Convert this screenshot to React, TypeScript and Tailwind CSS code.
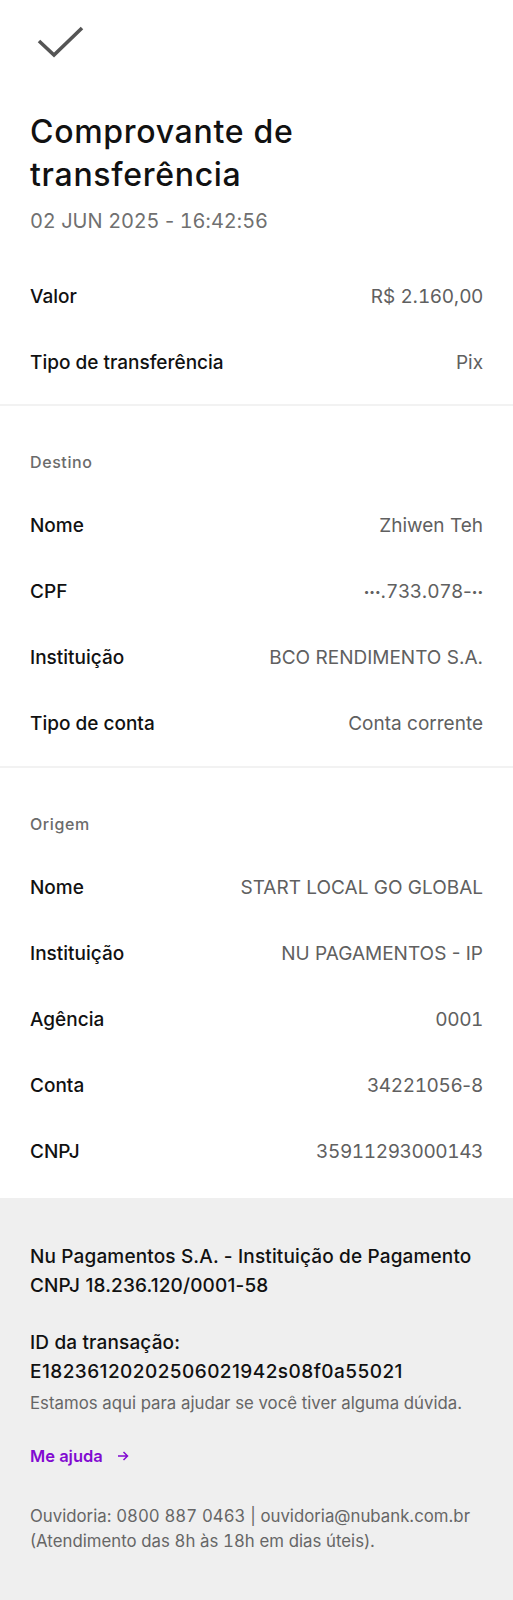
import React from "react";

const font = { fontFamily: "Inter, 'Liberation Sans', sans-serif" };

function Num({ text, digitClass = "tabular-nums" }: { text: string; digitClass?: string }) {
  const parts = text.split(/(\d+|•+)/);
  return (
    <>
      {parts.map((p, i) => {
        if (/^\d+$/.test(p)) {
          return (
            <span key={i} className={digitClass}>
              {p}
            </span>
          );
        }
        if (/^•+$/.test(p)) {
          return (
            <span key={i} className="align-[3px] text-[10px]">
              {p}
            </span>
          );
        }
        return <React.Fragment key={i}>{p}</React.Fragment>;
      })}
    </>
  );
}

function Row({ label, value }: { label: string; value: string }) {
  return (
    <div className="flex h-[66px] items-center justify-between">
      <span className="text-[19px] font-medium text-[#111111]">{label}</span>
      <span className="text-[19px] font-normal text-[#606060]">
        <Num text={value} digitClass="tabular-nums tracking-[-0.4px]" />
      </span>
    </div>
  );
}

function SectionLabel({ children }: { children: React.ReactNode }) {
  return (
    <div className="h-[20px] text-[16px] font-medium leading-[20px] tracking-[0.6px] text-[#6b6b6b]">{children}</div>
  );
}

export default function App() {
  return (
    <div className="flex min-h-[1600px] w-full flex-col bg-white" style={font}>
      <div className="px-[30px]">
        <div className="pt-[25px]">
          <svg width="48" height="34" viewBox="0 0 48 34" className="ml-[7px]">
            <path d="M2 16 L17 30 L45 3" fill="none" stroke="#555555" strokeWidth="3.6" strokeLinecap="butt" strokeLinejoin="miter" />
          </svg>
        </div>
        <h1 className="mt-[51px] text-[32px] font-medium leading-[43px] tracking-[0.7px] text-[#111111]">
          Comprovante de
          <br />
          transferência
        </h1>
        <div className="mt-[11px] text-[20px] leading-[28px] text-[#707070]">
          <Num text="02 JUN 2025 - 16:42:56" digitClass="tabular-nums tracking-[-0.2px]" />
        </div>
        <div className="mt-[29px]">
          <Row label="Valor" value="R$ 2.160,00" />
          <Row label="Tipo de transferência" value="Pix" />
        </div>
      </div>
      <div className="mt-[8px] h-[2px] bg-[#f2f2f2]" />
      <div className="px-[30px] pt-[46px]">
        <SectionLabel>Destino</SectionLabel>
        <div className="mt-[21px]">
          <Row label="Nome" value="Zhiwen Teh" />
          <Row label="CPF" value="•••.733.078-••" />
          <Row label="Instituição" value="BCO RENDIMENTO S.A." />
          <Row label="Tipo de conta" value="Conta corrente" />
        </div>
      </div>
      <div className="mt-[9px] h-[2px] bg-[#f2f2f2]" />
      <div className="px-[30px] pt-[46px]">
        <SectionLabel>Origem</SectionLabel>
        <div className="mt-[21px]">
          <Row label="Nome" value="START LOCAL GO GLOBAL" />
          <Row label="Instituição" value="NU PAGAMENTOS - IP" />
          <Row label="Agência" value="0001" />
          <Row label="Conta" value="34221056-8" />
          <Row label="CNPJ" value="35911293000143" />
        </div>
      </div>
      <div className="mt-[13px] flex-1 bg-[#efefef] px-[30px] pt-[45px] pb-[40px]">
        <div className="text-[19px] font-medium leading-[28.7px] tracking-[0.15px] text-[#111111]">
          <div>Nu Pagamentos S.A. - Instituição de Pagamento</div>
          <div>CNPJ 18.236.120/0001-58</div>
          <div className="mt-[28.7px]">ID da transação:</div>
          <div className="tracking-[0.45px]">E18236120202506021942s08f0a55021</div>
        </div>
        <div className="mt-[3px] text-[16.8px] leading-[27px] text-[#666666]">
          Estamos aqui para ajudar se você tiver alguma dúvida.
        </div>
        <div className="mt-[27px] flex items-center gap-[14px] text-[16.5px] font-semibold text-[#820ad1]">
          <span>Me ajuda</span>
          <svg width="12" height="12" viewBox="0 0 12 12">
            <path d="M1 6 H10.5 M6.5 2 L10.5 6 L6.5 10" fill="none" stroke="#820ad1" strokeWidth="1.5" />
          </svg>
        </div>
        <div className="mt-[36px] text-[16.8px] leading-[25px] text-[#666666]">
          <div>
            <Num text="Ouvidoria: 0800 887 0463 | ouvidoria@nubank.com.br" />
          </div>
          <div>
            <Num text="(Atendimento das 8h às 18h em dias úteis)." />
          </div>
        </div>
      </div>
    </div>
  );
}
